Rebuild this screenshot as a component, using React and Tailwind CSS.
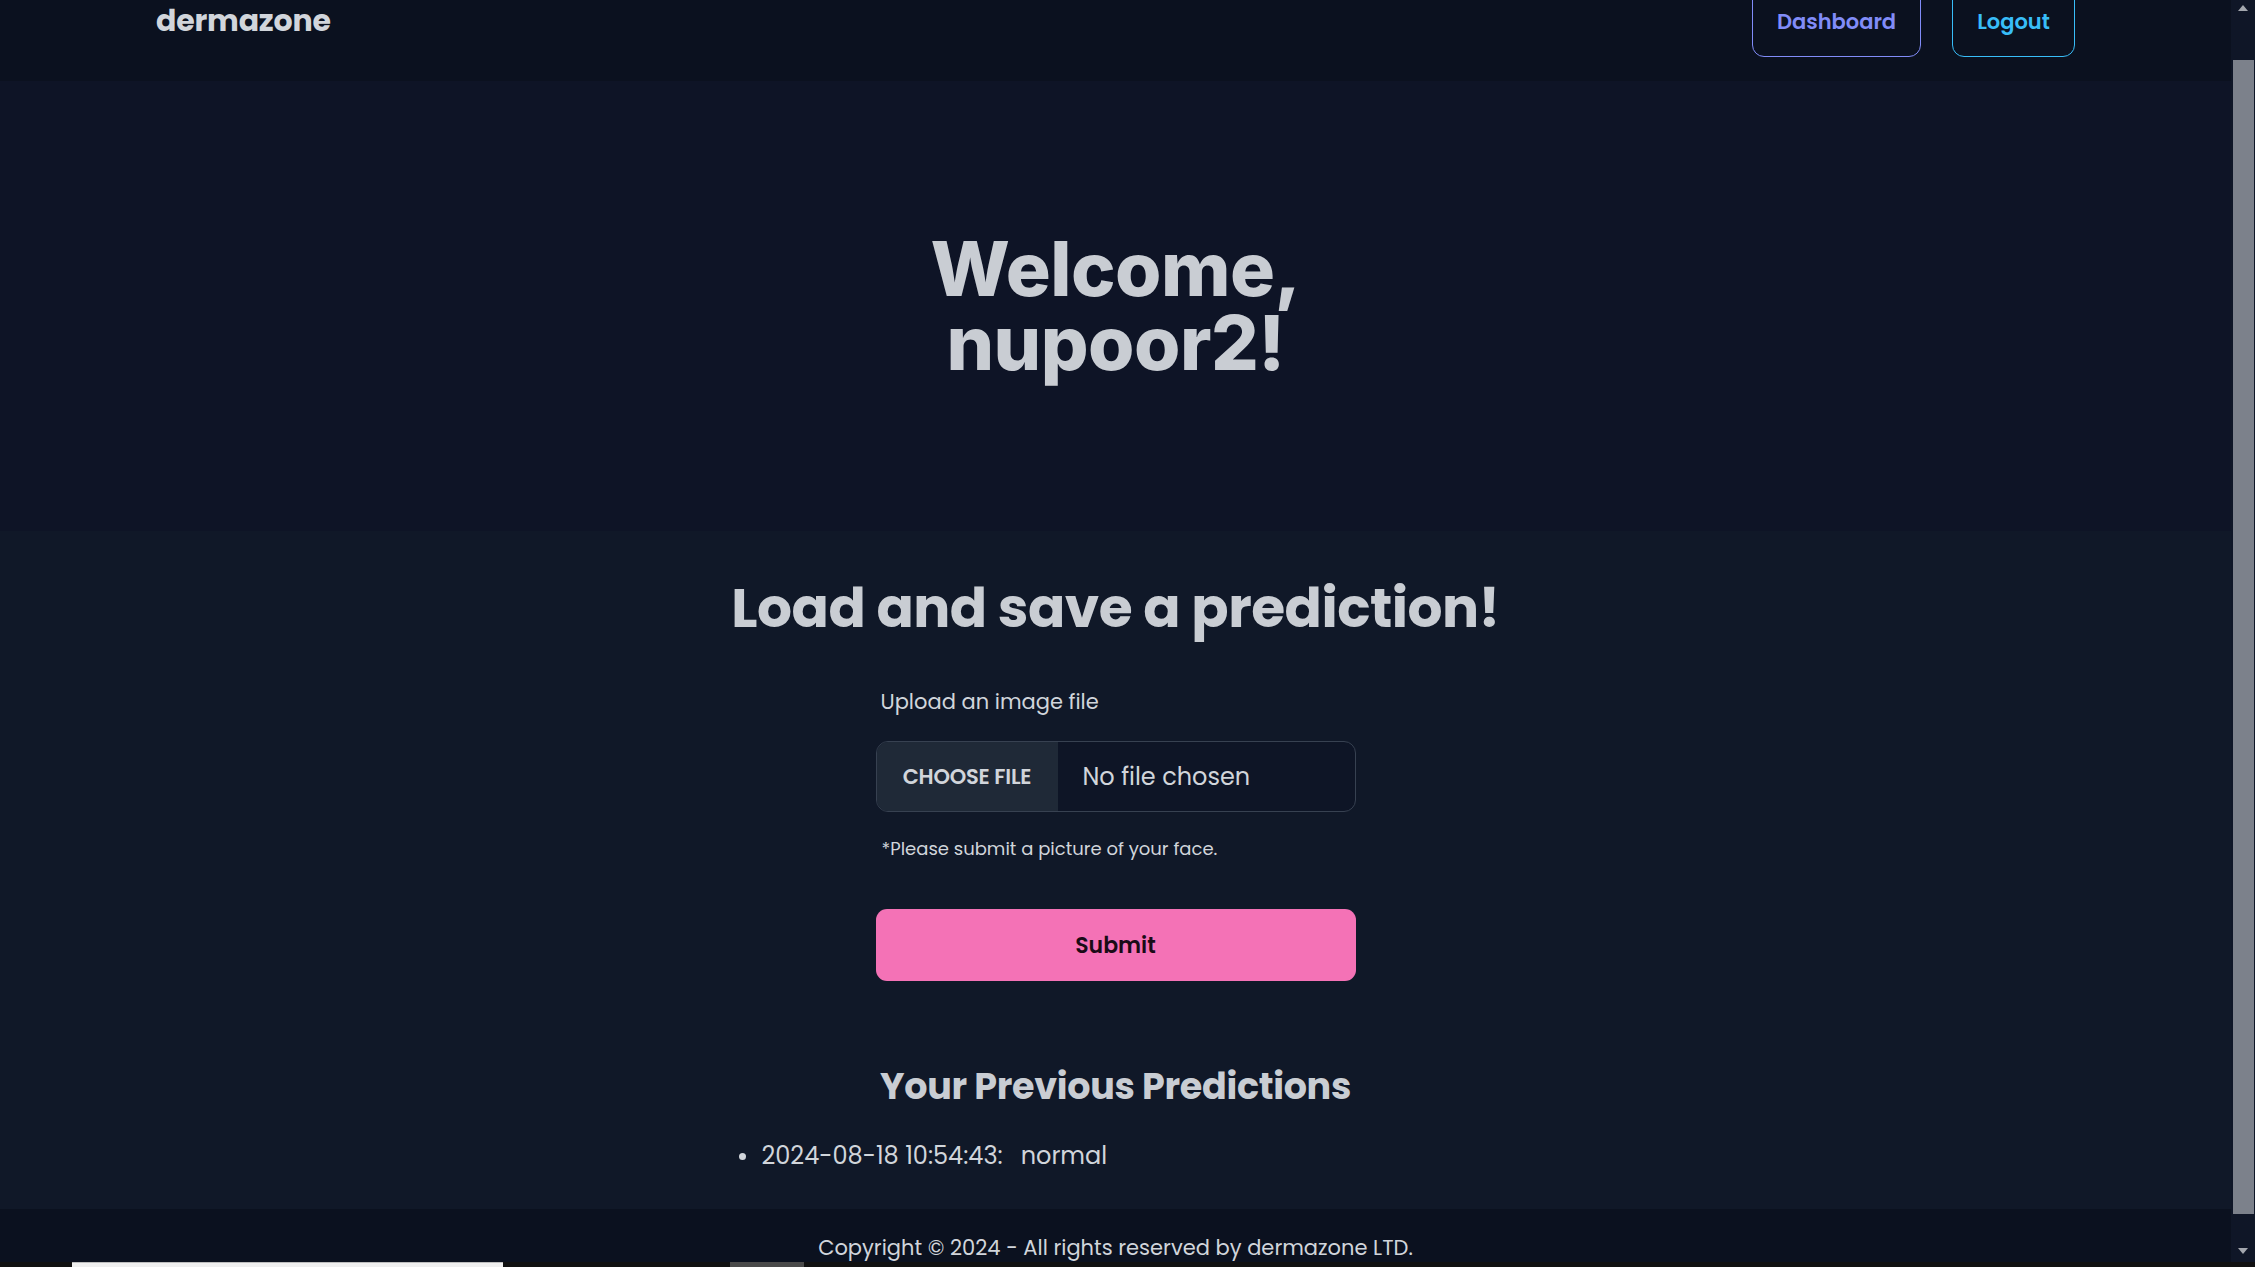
import React from "react";

export default function App() {
  const sans = "font-['Poppins','Open_Sans',sans-serif]";
  return (
    <div className={`w-full h-[1267px] overflow-hidden flex flex-col bg-[#101828] ${sans}`}>
      <div className="flex flex-1 min-h-0">
        {/* page content */}
        <div className="flex-1 flex flex-col min-w-0">
          {/* header */}
          <header className="h-[81px] shrink-0 overflow-hidden bg-[#0b111f] flex items-start justify-between px-[156px]">
            <div className="text-[30px] leading-[42px] font-bold text-[#d1d5db] tracking-[-0.2px]">dermazone</div>
            <nav className="flex items-start gap-[31px] -mt-[14px]">
              <a className="h-[71px] w-[169px] flex items-center justify-center rounded-[12px] border border-[#818cf8] text-[#818cf8] text-[21px] leading-[30px] font-semibold">
                Dashboard
              </a>
              <a className="h-[71px] w-[123px] flex items-center justify-center rounded-[12px] border border-[#38bdf8] text-[#38bdf8] text-[21px] leading-[30px] font-semibold">
                Logout
              </a>
            </nav>
          </header>

          {/* hero */}
          <section className="h-[450px] shrink-0 bg-[#0e1426] pt-[151px] flex flex-col items-center">
            <h1 className="font-['Inter',sans-serif] font-extrabold text-[75px] leading-[74px] text-[#c9cdd3] text-center tracking-[-0.5px]">
              <span className="block">Welcome,</span>
              <span className="block">nupoor2!</span>
            </h1>
          </section>

          {/* main form section */}
          <section className="h-[678px] shrink-0 bg-[#101828] pt-[47px] flex flex-col items-center">
            <h2 className="text-[55px] leading-[60px] font-bold text-[#c9cdd3] tracking-[-0.5px]">
              Load and save a prediction!
            </h2>

            <div className="w-[480px] mt-[49px] flex flex-col">
              <label className="pl-[5px] text-[21px] leading-[30px] text-[#d1d5db]">Upload an image file</label>
              <div className="mt-[24px] h-[71px] rounded-[12px] border border-[#374151] flex overflow-hidden bg-[#0e1526]">
                <div className="w-[181px] shrink-0 bg-[#1f2937] flex items-center justify-center text-[21px] font-semibold uppercase text-[#d1d5db] tracking-[-0.2px]">
                  Choose file
                </div>
                <div className="flex items-center pl-[25px] text-[24px] text-[#d1d5db]">No file chosen</div>
              </div>
              <p className="mt-[24px] pl-[6px] text-[18px] leading-[26px] text-[#d1d5db]">
                *Please submit a picture of your face.
              </p>
              <button className="mt-[47px] h-[72px] w-[480px] rounded-[11px] bg-[#f472b6] text-[#1a0b16] text-[22px] font-semibold flex items-center justify-center">
                Submit
              </button>
            </div>

            <h3 className="mt-[82px] text-[36.5px] leading-[48px] font-bold text-[#c9cdd3] tracking-[-0.3px]">
              Your Previous Predictions
            </h3>
            <ul className="w-[768px] mt-[28px] pl-[7px]">
              <li className="flex items-center text-[24px] leading-[34px] text-[#d1d5db]">
                <span className="w-[7px] h-[7px] rounded-full bg-[#d1d5db] mr-[16px]" />
                <span>2024-08-18 10:54:43:</span>
                <span className="ml-[18px]">normal</span>
              </li>
            </ul>
          </section>

          {/* footer */}
          <footer className="flex-1 bg-[#0b111f] pt-[25px] overflow-hidden flex justify-center">
            <p className="text-[21px] leading-[28px] text-[#d1d5db]">
              Copyright © 2024 - All rights reserved by dermazone LTD.
            </p>
          </footer>
        </div>

        {/* scrollbar */}
        <div className="w-[24px] shrink-0 bg-[#0f1627] flex flex-col">
          <div className="h-[60px] flex justify-center pt-[5px]">
            <svg width="10" height="6" viewBox="0 0 10 6">
              <path d="M5 0 L10 6 L0 6 Z" fill="#a3a7ae" />
            </svg>
          </div>
          <div className="h-[1154px] w-[21px] ml-[2px] bg-[#7c818b]" />
          <div className="flex-1 flex justify-center items-end pb-[8px]">
            <svg width="10" height="6" viewBox="0 0 10 6">
              <path d="M0 0 L10 0 L5 6 Z" fill="#a3a7ae" />
            </svg>
          </div>
        </div>
      </div>

      {/* bottom strip */}
      <div className="h-[5px] shrink-0 bg-[#111111] flex">
        <div className="ml-[72px] w-[431px] bg-[#efefef] border-t border-[#bdbdbd]" />
        <div className="ml-[227px] w-[74px] bg-[#4a4a4a]" />
      </div>
    </div>
  );
}
